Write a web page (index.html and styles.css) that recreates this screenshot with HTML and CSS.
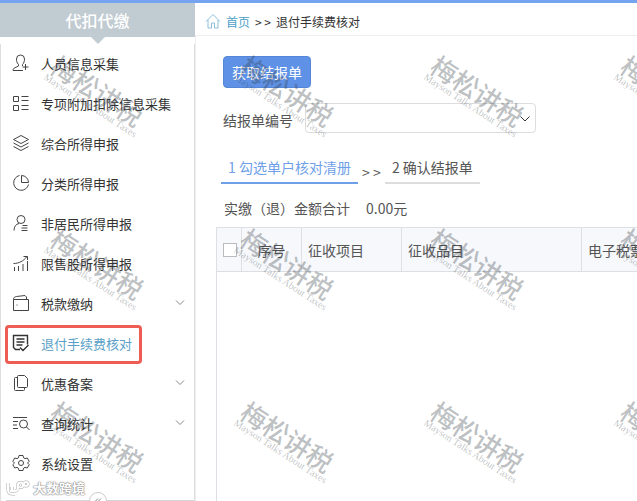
FILE: index.html
```html
<!DOCTYPE html>
<html lang="zh-CN">
<head>
  <meta charset="UTF-8">
  <meta name="viewport" content="width=device-width, initial-scale=1.0">
  <title>退付手续费核对</title>
  <link rel="stylesheet" href="styles.css">
</head>
<body>
  <div class="layout">
    <aside class="sidebar">
      <h1 class="sidebar-title">代扣代缴</h1>
      <nav class="menu">
        <a class="menu-item" href="#">
          <svg class="icon" viewBox="0 0 18 18"><path d="M6.500 10.500C4.500 8.500 4.500 6.500 4.500 5a4 4 0 0 1 8 0c0 2-.5 4-2 5.500v1.500M6.500 10.500v1.500L2.500 14c-1 .5-1.500 1-1.500 2.500h10M13.500 10v6M10.500 13h6"/></svg>
          <span>人员信息采集</span>
        </a>
        <a class="menu-item" href="#">
          <svg class="icon" viewBox="0 0 18 18"><path d="M1.500 2.500h5v5h-5zM1.500 11.500h5v5h-5zM9.500 2.500h7M9.500 6.500h7M9.500 11.500h7M9.500 15.500h7"/></svg>
          <span>专项附加扣除信息采集</span>
        </a>
        <a class="menu-item" href="#">
          <svg class="icon" viewBox="0 0 18 18"><path d="M9 1.500l7.500 4L9 9.500l-7.500-4zM1.500 9L9 13l7.500-4M1.500 12.500l7.500 4 7.500-4"/></svg>
          <span>综合所得申报</span>
        </a>
        <a class="menu-item" href="#">
          <svg class="icon" viewBox="0 0 18 18"><path d="M7.500 1.500a7.500 7.500 0 1 0 9 9M9.500 1.500v7h7a7 7 0 0 0-7-7z"/></svg>
          <span>分类所得申报</span>
        </a>
        <a class="menu-item" href="#">
          <svg class="icon" viewBox="0 0 18 18"><circle cx="9" cy="5.500" r="4"/><path d="M2 16.500c0-4 2-6.500 5-7M10.500 11.500h5M9.500 14h6M9.500 16.500h6"/></svg>
          <span>非居民所得申报</span>
        </a>
        <a class="menu-item" href="#">
          <svg class="icon" viewBox="0 0 18 18"><path d="M2.500 13v4M6.500 12v5M11 10v7M15.500 7v10M1.500 9.500C7 9.500 11.500 7 15 2.500M11.500 2.500h4V6"/></svg>
          <span>限售股所得申报</span>
        </a>
        <a class="menu-item" href="#">
          <svg class="icon" viewBox="0 0 18 18"><path d="M1.500 5.500h15v11h-15zM1.500 5.500c0-2 1-2.500 3-3l8.500-1 1.500 1.500v2.500M4.500 11h1"/></svg>
          <span>税款缴纳</span>
          <svg class="arrow" viewBox="0 0 10 6"><path d="M1 .5l4 4 4-4"/></svg>
        </a>
        <a class="menu-item active" href="#">
          <svg class="icon" viewBox="0 0 18 18"><path d="M8 15.500H3.500l-2-2v-12h14v9M4.500 5h8M4.500 8h8M4.500 11h6M8 13.500l3 3 5.500-5.500"/></svg>
          <span>退付手续费核对</span>
        </a>
        <a class="menu-item" href="#">
          <svg class="icon" viewBox="0 0 18 18"><path d="M6.500 1.500h6l3 3v8a1 1 0 0 1-1 1h-8a1 1 0 0 1-1-1v-10a1 1 0 0 1 1-1M5.500 3.500h-2a1 1 0 0 0-1 1v11a1 1 0 0 0 1 1h8a1 1 0 0 0 1-1v-2"/></svg>
          <span>优惠备案</span>
          <svg class="arrow" viewBox="0 0 10 6"><path d="M1 .5l4 4 4-4"/></svg>
        </a>
        <a class="menu-item" href="#">
          <svg class="icon" viewBox="0 0 18 18"><path d="M1 3.500h14M1 7.500h5M1 11h4M1 14.500h5M14.500 13l3 3"/><circle cx="11.500" cy="10" r="4"/></svg>
          <span>查询统计</span>
          <svg class="arrow" viewBox="0 0 10 6"><path d="M1 .5l4 4 4-4"/></svg>
        </a>
        <a class="menu-item" href="#">
          <svg class="icon" viewBox="0 0 18 18"><path d="M7 1.500h4l.6 2.300 1.400.8 2.300-.6 1.900 3.300L15.500 9l1.700 1.700-1.900 3.300-2.300-.6-1.400.8-.6 2.300H7l-.6-2.300-1.400-.8-2.300.6-1.900-3.300L2.500 9 .8 7.300 2.700 4l2.300.6 1.400-.8z"/><circle cx="9" cy="9" r="2.500"/></svg>
          <span>系统设置</span>
        </a>
      </nav>
      <div class="sidebar-foot">
        <button class="collapse" type="button" aria-label="收起">
          <svg viewBox="0 0 8 8"><path d="M4 .5L1 3.500l3 3M7 .5L4 3.500l3 3"/></svg>
        </button>
      </div>
    </aside>

    <main class="main">
      <div class="breadcrumb">
        <svg class="home" viewBox="0 0 16 16"><path d="M1 8.500L8 1.500l7 7M3 7v8h3.500v-5h3v5H13V7"/></svg>
        <a href="#">首页</a>
        <span>&gt; &gt;</span>
        <span>退付手续费核对</span>
      </div>

      <div class="content">
        <div class="toolbar">
          <button class="btn" type="button">获取结报单</button>
        </div>
        <div class="field">
          <label for="reportNo">结报单编号</label>
          <div class="select-wrap">
            <select id="reportNo"><option></option></select>
            <svg class="select-arrow" viewBox="0 0 10 6"><path d="M.5 .5L5 5 9.500 .5"/></svg>
          </div>
        </div>
        <div class="steps">
          <a class="step current" href="#">1 勾选单户核对清册</a>
          <span class="step-sep">&gt; &gt;</span>
          <a class="step" href="#">2 确认结报单</a>
        </div>
        <div class="total">
          <span>实缴（退）金额合计</span>
          <span>0.00元</span>
        </div>
        <div class="table-box">
          <table>
            <colgroup>
              <col class="col-check">
              <col class="col-index">
              <col class="col-project">
              <col class="col-item">
              <col class="col-ticket">
            </colgroup>
            <thead>
              <tr>
                <th class="check"><input type="checkbox" aria-label="全选"></th>
                <th class="center">序号</th>
                <th>征收项目</th>
                <th>征收品目</th>
                <th>电子税票</th>
              </tr>
            </thead>
          </table>
        </div>
      </div>
    </main>
  </div>

  <div class="watermarks" aria-hidden="true">
    <div class="mark"><b>梅松讲税</b><i>Mayson Talks About Taxes</i></div>
    <div class="mark"><b>梅松讲税</b><i>Mayson Talks About Taxes</i></div>
    <div class="mark"><b>梅松讲税</b><i>Mayson Talks About Taxes</i></div>
    <div class="mark"><b>梅松讲税</b><i>Mayson Talks About Taxes</i></div>
    <div class="mark"><b>梅松讲税</b><i>Mayson Talks About Taxes</i></div>
    <div class="mark"><b>梅松讲税</b><i>Mayson Talks About Taxes</i></div>
    <div class="mark"><b>梅松讲税</b><i>Mayson Talks About Taxes</i></div>
    <div class="mark"><b>梅松讲税</b><i>Mayson Talks About Taxes</i></div>
    <div class="mark"><b>梅松讲税</b><i>Mayson Talks About Taxes</i></div>
    <div class="mark"><b>梅松讲税</b><i>Mayson Talks About Taxes</i></div>
    <div class="mark"><b>梅松讲税</b><i>Mayson Talks About Taxes</i></div>
    <div class="mark"><b>梅松讲税</b><i>Mayson Talks About Taxes</i></div>
  </div>

  <div class="brand">
    <svg viewBox="0 0 24 16">
      <path class="brand-edge" d="M2 3v7c0 3 2 4 5 4h2M6 7v3M12 3v5a3 3 0 0 1-3 3M12 5a2.500 2.500 0 1 0 5 0 2.500 2.500 0 1 0-5 0M18 4a2 2 0 1 0 4 0 2 2 0 1 0-4 0"/>
      <path class="brand-fill" d="M2 3v7c0 3 2 4 5 4h2M6 7v3M12 3v5a3 3 0 0 1-3 3M12 5a2.500 2.500 0 1 0 5 0 2.500 2.500 0 1 0-5 0M18 4a2 2 0 1 0 4 0 2 2 0 1 0-4 0"/>
    </svg>
    <span>大数跨境</span>
  </div>
</body>
</html>
```
FILE: styles.css
```css
:root {
  --primary: #5f92e6;
  --link: #4d9fc9;
  --text: #333;
  --muted: #555;
  --line: #dcdfe3;
}

* {
  box-sizing: border-box;
}

body {
  margin: 0;
  position: relative;
  height: 100vh;
  overflow: hidden;
  background: #fff;
  color: var(--text);
  font-family: "Noto Sans CJK SC", sans-serif;
  font-size: 14px;
}

a {
  color: inherit;
  text-decoration: none;
}

svg {
  fill: none;
  stroke: currentColor;
}

.layout {
  display: flex;
  height: 100%;
  border-top: 3px solid #74a3f0;
}

/* sidebar */
.sidebar {
  flex: 0 0 195px;
  display: flex;
  flex-direction: column;
}

.sidebar-title {
  position: relative;
  margin: 0 0 7px;
  height: 34px;
  background: #c1cbd2;
  color: #fff;
  font-size: 16px;
  font-weight: 500;
  line-height: 34px;
  text-align: center;
}

.sidebar-title::after {
  content: "";
  position: absolute;
  top: 100%;
  left: 50%;
  margin-left: -7px;
  border: 7px solid transparent;
  border-top-color: #c1cbd2;
  border-bottom: 0;
}

.menu {
  border: solid #dedede;
  border-width: 0 1px;
}

.menu-item {
  position: relative;
  display: flex;
  align-items: center;
  gap: 11px;
  height: 40px;
  padding: 0 9px 2px 11px;
  font-size: 13px;
}

.icon {
  width: 18px;
  height: 18px;
  color: #444;
}

.arrow {
  width: 10px;
  height: 6px;
  margin-left: auto;
  color: #888;
}

.menu-item.active {
  color: #5b9fc8;
}

.active .icon {
  color: #333;
  stroke-width: 1.4;
}

/* frame round the selected entry */
.menu-item.active::after {
  content: "";
  position: absolute;
  top: 1px;
  left: 4px;
  width: 131px;
  height: 33px;
  border: 3px solid #ee5d54;
  border-radius: 4px;
}

.sidebar-foot {
  position: relative;
  flex: 1;
  border: solid #dedede;
  border-width: 0 1px;
}

.sidebar-foot::before {
  content: "";
  position: absolute;
  top: 16px;
  left: 5px;
  right: 0;
  border-top: 1px solid #d5d5d5;
}

.collapse {
  position: absolute;
  top: 8px;
  left: 50%;
  width: 18px;
  height: 18px;
  margin-left: -9px;
  padding: 5px 4px;
  border: 1px solid #ccc;
  border-radius: 50%;
  background: #fff;
  color: #888;
}

.collapse svg {
  display: block;
  width: 8px;
  height: 8px;
}

/* right side */
.main {
  flex: 1;
  min-width: 0;
  display: flex;
  flex-direction: column;
}

.breadcrumb {
  display: flex;
  align-items: center;
  gap: 5px;
  height: 33px;
  padding: 4px 10px 0;
  border-bottom: 1px solid #eee;
  font-size: 12px;
}

.breadcrumb a {
  color: var(--link);
}

.home {
  width: 16px;
  height: 16px;
  color: #8dbfdc;
}

.content {
  flex: 1;
  display: flex;
  flex-direction: column;
  padding: 20px 0 0 20px;
  border-left: 1px solid #eee;
  color: var(--muted);
}

.toolbar,
.field {
  padding-left: 7px;
}

.btn {
  width: 88px;
  height: 32px;
  padding: 0;
  border: 1px solid #5586d8;
  border-radius: 4px;
  background: var(--primary);
  color: #fff;
  font: inherit;
}

.field {
  display: flex;
  align-items: center;
  gap: 12px;
  margin-top: 15px;
}

.field label {
  padding-top: 4px;
}

.select-wrap {
  position: relative;
  width: 231px;
  height: 30px;
}

.select-wrap select {
  appearance: none;
  width: 100%;
  height: 100%;
  border: 1px solid #ddd;
  border-radius: 4px;
  background: #fff;
  font: inherit;
}

.select-arrow {
  position: absolute;
  top: 13px;
  right: 6px;
  width: 10px;
  height: 6px;
  color: #333;
}

.steps {
  display: flex;
  align-items: flex-end;
  margin-top: 17px;
  padding-left: 5px;
}

.step {
  height: 34px;
  padding: 0 7px;
  border-bottom: 2px solid #ddd;
  line-height: 34px;
}

.step.current {
  border-color: #6f9fe8;
  color: #6f9fe8;
}

.step-sep {
  width: 27px;
  line-height: 24px;
  text-align: center;
}

.total {
  display: flex;
  gap: 16px;
  height: 43px;
  padding: 4px 8px 0;
  line-height: 40px;
}

.table-box {
  flex: 1;
  overflow: hidden;
  border-left: 1px solid var(--line);
}

table {
  width: 620px;
  table-layout: fixed;
  border-collapse: separate;
  border-spacing: 0;
}

.col-check {
  width: 25px;
}

.col-index {
  width: 60px;
}

.col-project {
  width: 100px;
}

.col-item {
  width: 180px;
}

th {
  height: 45px;
  padding: 0 6px;
  border: solid var(--line);
  border-width: 1px 1px 1px 0;
  background: #f6f8fc;
  font-weight: 400;
  text-align: left;
  white-space: nowrap;
}

th.center {
  text-align: center;
}

.check input {
  appearance: none;
  display: block;
  width: 14px;
  height: 14px;
  margin: 0;
  border: 1px solid #bbb;
  background: #fff;
}

/* repeated watermark over the whole page */
.watermarks {
  position: absolute;
  inset: 0;
  display: grid;
  grid-template-columns: repeat(4, 190px);
  grid-auto-rows: 173px;
  padding: 80px 0 0 40px;
  overflow: hidden;
  color: rgba(50, 58, 64, 0.32);
  pointer-events: none;
}

.mark {
  width: 112px;
  height: 40px;
  transform: rotate(33deg);
  white-space: nowrap;
}

.mark b,
.mark i {
  display: block;
  font-style: normal;
}

.mark b {
  font-size: 26px;
  font-weight: 500;
  line-height: 22px;
}

.mark i {
  font-family: "Liberation Serif", serif;
  font-size: 10px;
  line-height: 12px;
}

.brand {
  position: absolute;
  left: 6px;
  bottom: 4px;
  display: flex;
  align-items: center;
  gap: 3px;
  color: #fff;
  font-size: 13px;
  font-weight: 700;
  line-height: 18px;
  text-shadow: 0 0 1px #888, 0 0 1px #888, 0 0 2px #999;
}

.brand svg {
  width: 24px;
  height: 16px;
}

.brand-edge {
  stroke: #aaa;
  stroke-width: 3;
}

.brand-fill {
  stroke: #fff;
  stroke-width: 2;
}
```
